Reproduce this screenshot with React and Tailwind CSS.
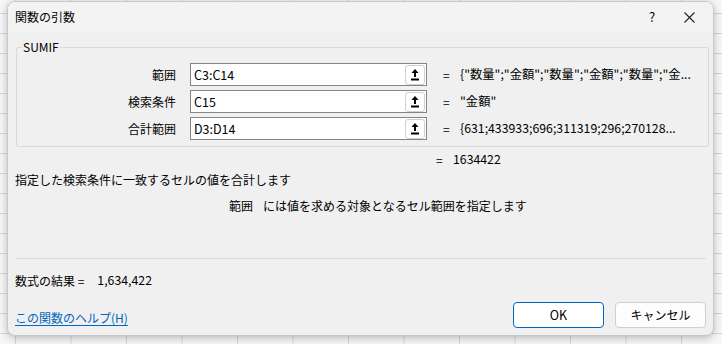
import React from 'react';

const font = 'font-["Segoe_UI","Noto_Sans_CJK_JP",sans-serif]';

function PickButton() {
  return (
    <div className="w-[20px] h-[20px] mr-[1px] flex items-center justify-center bg-white border border-[#d0d0d0] rounded-[3px]">
      <svg width="10" height="13" viewBox="0 0 10 13">
        <path d="M5 1 L1.5 5 H4 V9 H6 V5 H8.5 Z" fill="#000" />
        <rect x="1" y="10.5" width="8" height="2" fill="#000" />
      </svg>
    </div>
  );
}

function ArgRow({ label, value, result }) {
  return (
    <div className="flex items-center h-[23px]">
      <div className="w-[161px] text-right pr-[2px]">{label}</div>
      <div className="ml-[12px] w-[237px] h-[23px] bg-white border border-[#858585] flex items-center">
        <span className="flex-1 pl-[3px] pt-[1px] text-[12.5px]">{value}</span>
        <PickButton />
      </div>
      <div className="ml-[16px] w-[17px]">=</div>
      <div className="whitespace-nowrap text-[12.3px]">{result}</div>
    </div>
  );
}

export default function App() {
  return (
    <div
      className={`relative w-[722px] h-[344px] overflow-hidden bg-[#f7f7f7] bg-[linear-gradient(to_right,#d6d6d6_1px,transparent_1px),linear-gradient(to_bottom,#d6d6d6_1px,transparent_1px)] bg-size-[55.5px_20px] bg-position-[15px_13px] text-[12px] text-black ${font}`}
    >
      <div className="absolute left-[7px] top-[1px] w-[707px] h-[335px] rounded-[8px] bg-[#f0f0f0] border border-[#c8c8c8] shadow-[0_2px_8px_rgba(0,0,0,0.25)] flex flex-col overflow-hidden">
        {/* title bar */}
        <div className="h-[30px] flex items-center bg-[#f3f3f3] pl-[7px]">
          <span className="flex-1">関数の引数</span>
          <span className="w-[20px] text-center text-[13px] mr-[22px]">?</span>
          <svg className="mr-[18px]" width="11" height="11" viewBox="0 0 11 11">
            <path d="M0.5 0.5 L10.5 10.5 M10.5 0.5 L0.5 10.5" stroke="#222" strokeWidth="1.1" />
          </svg>
        </div>

        {/* group box */}
        <div className="relative mt-[15px] ml-[8px] w-[693px] border border-[#d9d9d9] rounded-[2px] pt-[15px] pb-[6px] flex flex-col gap-[4px]">
          <span className="absolute left-[5px] top-[-9px] bg-[#f0f0f0] px-[1px] leading-[16px]">SUMIF</span>
          <ArgRow label="範囲" value="C3:C14" result={'{"数量";"金額";"数量";"金額";"数量";"金...'} />
          <ArgRow label="検索条件" value="C15" result={'"金額"'} />
          <ArgRow label="合計範囲" value="D3:D14" result="{631;433933;696;311319;296;270128..." />
        </div>

        <div className="flex h-[24px] items-center pl-[428px] pt-[1px]">
          <span className="w-[17px]">=</span>
          <span className="text-[12.3px]">1634422</span>
        </div>
        <div className="h-[17px] flex items-center pl-[7px]">指定した検索条件に一致するセルの値を合計します</div>
        <div className="h-[36px] flex items-center pl-[221px]">
          <span className="w-[34px]">範囲</span>
          <span>には値を求める対象となるセル範囲を指定します</span>
        </div>

        <div className="mt-[34px] mx-[7px] border-t border-[#dcdcdc]" />

        <div className="h-[43px] flex items-center pl-[7px]">
          <span>数式の結果 =</span>
          <span className="ml-[13px] text-[12.3px]">1,634,422</span>
        </div>

        <div className="flex items-center pl-[7px] pr-[7px]">
          <a className="flex-1 text-[#0067c0] underline underline-offset-2 pt-[6px]">この関数のヘルプ(H)</a>
          <button className="w-[91px] h-[26px] bg-white border border-[#0067c0] rounded-[4px] text-black text-[12.5px]">OK</button>
          <button className="ml-[11px] w-[91px] h-[26px] bg-[#fdfdfd] border border-[#cfcfcf] rounded-[4px] text-black">キャンセル</button>
        </div>
      </div>
    </div>
  );
}
